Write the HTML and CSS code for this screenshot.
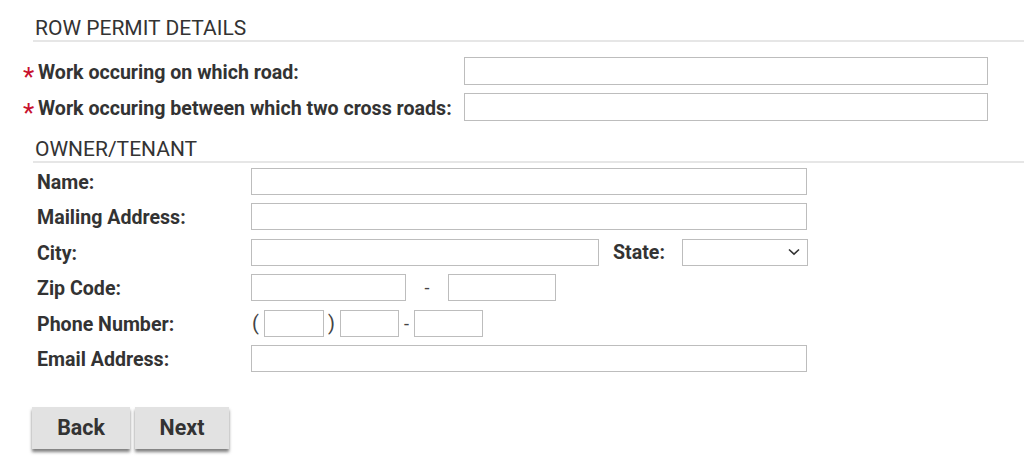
FILE: index.html
```html
<!DOCTYPE html>
<html>
<head>
<meta charset="utf-8">
<link rel="stylesheet" href="styles.css">
</head>
<body>
<div class="page">
  <h2 class="section-title first">ROW PERMIT DETAILS</h2>
  <div class="req-grid">
    <label class="req-label"><span class="star">*</span>Work occuring on which road:</label>
    <input class="field road" type="text">
    <label class="req-label"><span class="star">*</span>Work occuring between which two cross roads:</label>
    <input class="field road" type="text">
  </div>

  <h2 class="section-title second">OWNER/TENANT</h2>
  <div class="owner-grid">
    <label class="lbl">Name:</label>
    <div class="ctl"><input class="field wide" type="text"></div>

    <label class="lbl">Mailing Address:</label>
    <div class="ctl"><input class="field wide" type="text"></div>

    <label class="lbl">City:</label>
    <div class="ctl">
      <input class="field city" type="text">
      <label class="lbl state-lbl">State:</label>
      <div class="select">
        <svg class="chev" width="12" height="8" viewBox="0 0 12 8"><path d="M1 1.5 L6 6.2 L11 1.5" fill="none" stroke="#333" stroke-width="1.6"/></svg>
      </div>
    </div>

    <label class="lbl">Zip Code:</label>
    <div class="ctl">
      <input class="field zip1" type="text">
      <span class="sep zipdash">-</span>
      <input class="field zip2" type="text">
    </div>

    <label class="lbl">Phone Number:</label>
    <div class="ctl">
      <span class="paren lp">(</span>
      <input class="field ph1" type="text">
      <span class="paren rp">)</span>
      <input class="field ph2" type="text">
      <span class="sep phdash">-</span>
      <input class="field ph3" type="text">
    </div>

    <label class="lbl">Email Address:</label>
    <div class="ctl"><input class="field wide" type="text"></div>
  </div>

  <div class="buttons">
    <button class="btn">Back</button>
    <button class="btn">Next</button>
  </div>
</div>
</body>
</html>
```

FILE: styles.css
```css
html, body {
  margin: 0;
  padding: 0;
  background: #fff;
}
body {
  font-family: Roboto, "Liberation Sans", Arial, sans-serif;
  color: #333;
}
.page {
  padding-left: 33px;
}
.section-title {
  margin: 0;
  font-weight: 400;
  font-size: 21px;
  line-height: 24px;
  color: #333;
  padding-left: 2px;
  padding-bottom: 0;
  border-bottom: 2px solid #e6e6e6;
}
.section-title.first {
  padding-top: 16px;
}
.section-title.second {
  margin-top: 16px;
}
.req-grid {
  display: grid;
  grid-template-columns: 440px 524px;
  row-gap: 8px;
  margin-top: 15px;
  margin-left: -9px;
  align-items: center;
}
.req-label {
  font-weight: 700;
  font-size: 19.6px;
  color: #333;
  display: flex;
  align-items: center;
  white-space: nowrap;
  padding-top: 2px;
}
.star {
  color: #c8102e;
  font-weight: 400;
  font-size: 26px;
  line-height: 20px;
  width: 14px;
  display: inline-block;
  position: relative;
  top: 5px;
  left: -1px;
}
.field {
  box-sizing: border-box;
  height: 28px;
  border: 1px solid #bdbdbd;
  border-radius: 0;
  background: #fff;
  margin: 0;
  padding: 0 4px;
  font: inherit;
}
.road {
  width: 524px;
}
.owner-grid {
  display: grid;
  grid-template-columns: 214px 1fr;
  grid-auto-rows: 27px;
  row-gap: 8.4px;
  margin-top: 5px;
  margin-left: 4px;
  align-items: center;
}
.lbl {
  font-weight: 700;
  font-size: 19.6px;
  color: #333;
  white-space: nowrap;
  padding-top: 2px;
}
.ctl {
  display: flex;
  align-items: center;
  height: 27px;
}
.ctl .field {
  height: 27px;
}
.ctl .lbl { padding-top: 0; }
.wide { width: 556px; }
.city { width: 348px; }
.state-lbl { margin-left: 14px; width: 69px; }
.select {
  box-sizing: border-box;
  width: 126px;
  height: 27px;
  border: 1px solid #bdbdbd;
  display: flex;
  align-items: center;
  justify-content: flex-end;
  padding-right: 7px;
}
.zip1 { width: 155px; }
.zip2 { width: 108px; }
.sep {
  font-size: 18px;
  color: #444;
}
.zipdash { width: 42px; text-align: center; }
.paren {
  font-size: 20px;
  color: #444;
}
.lp { width: 12px; padding-left: 1px; }
.ph1 { width: 60px; }
.rp { width: 16px; padding-left: 4px; box-sizing: border-box; }
.ph2 { width: 59px; }
.phdash { width: 15px; text-align: center; }
.ph3 { width: 69px; }
.buttons {
  display: flex;
  gap: 5px;
  margin-top: 35px;
  margin-left: -1px;
  padding-bottom: 12px;
}
.btn {
  box-sizing: border-box;
  height: 42px;
  padding: 0;
  border: none;
  background: #e2e2e2;
  color: #333;
  font-family: Roboto, "Liberation Sans", Arial, sans-serif;
  font-weight: 700;
  font-size: 21.4px;
  box-shadow: 0 3px 3px rgba(0,0,0,0.5);
  cursor: pointer;
}
.btn:first-child { width: 98px; }
.btn:last-child { width: 94px; }
```
